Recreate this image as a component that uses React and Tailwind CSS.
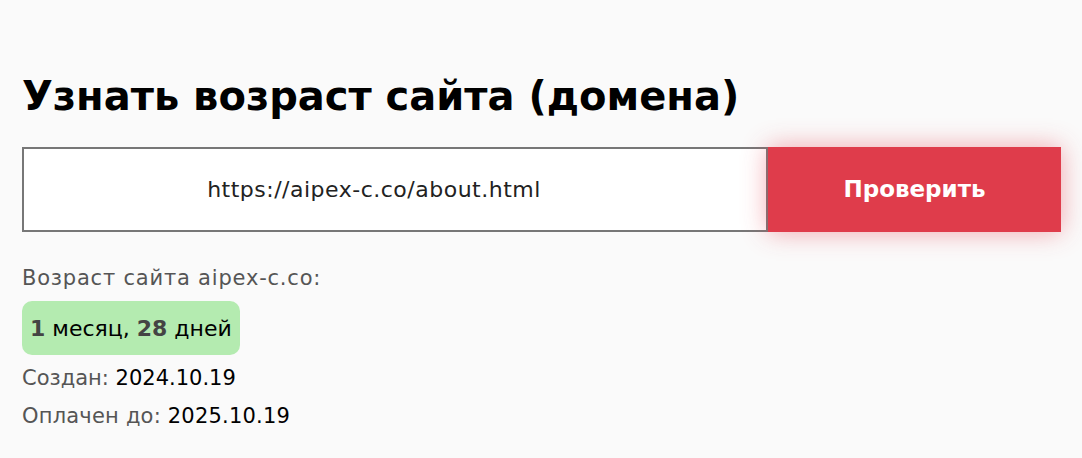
export default function App() {
  return (
    <main
      className="min-h-[458px] bg-[#fafafa] px-[22px] pt-[68px]"
      style={{ fontFamily: '"DejaVu Sans", "Noto Sans", sans-serif' }}
    >
      <h1 className="text-[40px] font-bold leading-[56px] text-black">
        Узнать возраст сайта (домена)
      </h1>

      <div className="mt-[23px] flex h-[85px] w-[1039px]">
        <div className="flex flex-1 items-center justify-center border-2 border-[#777] bg-white pr-[42px] text-[22px] tracking-[0.5px] text-[#222]">
          https://aipex-c.co/about.html
        </div>
        <button className="w-[293px] bg-[#df3c4b] text-[23px] font-bold text-white shadow-[0_0_24px_rgba(230,60,75,0.45)]">
          Проверить
        </button>
      </div>

      <div className="mt-[32px] text-[21px] leading-[28px] tracking-[0.8px] text-[#555]">
        Возраст сайта aipex-c.co:
      </div>
      <div className="mt-[9px] inline-flex h-[54px] items-center rounded-[10px] bg-[#b4ebb0] px-[8px] text-[22px] text-black">
        <b className="text-[#444]">1</b>&nbsp;месяц,&nbsp;<b className="text-[#444]">28</b>&nbsp;дней
      </div>
      <div className="mt-[4px] text-[21px] leading-[38px] text-[#555]">
        Создан: <span className="text-black">2024.10.19</span>
      </div>
      <div className="text-[21px] leading-[38px] tracking-[0.2px] text-[#555]">
        Оплачен до: <span className="text-black">2025.10.19</span>
      </div>
    </main>
  );
}
